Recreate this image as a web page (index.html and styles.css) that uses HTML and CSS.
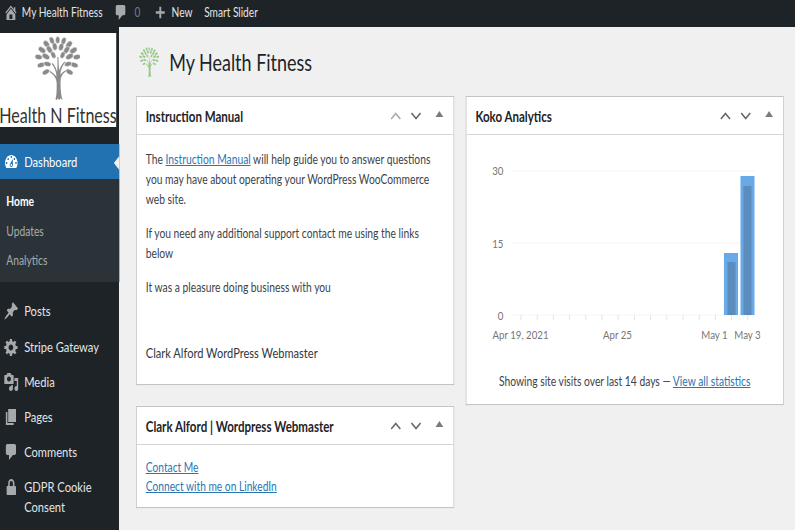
FILE: index.html
```html
<!DOCTYPE html>
<html lang="en">
<head>
  <meta charset="UTF-8" />
  <title>Dashboard | My Health Fitness</title>
  <link rel="stylesheet" href="styles.css">
</head>
<body>

  <svg class="defs" width="0" height="0">
    <symbol id="i-home" viewBox="1 1 18 18"><path d="M16 8.5l1.53 1.53-1.06 1.06L10 4.62l-6.47 6.47-1.06-1.06L10 2.5l4 4v-2h2v4zm-6-2.46l6 5.99V18H4v-5.97zM12 17v-5H8v5h4z"/></symbol>
    <symbol id="i-comment" viewBox="1 1 18 18"><path d="M5 2h9c1.1 0 2 .9 2 2v7c0 1.1-.9 2-2 2h-2l-5 5v-5H5c-1.1 0-2-.9-2-2V4c0-1.1.9-2 2-2z"/></symbol>
    <symbol id="i-plus" viewBox="2 2 16 16"><path d="M17 8.5v3h-5.500V17h-3v-5.500H3v-3h5.500V3h3v5.500z"/></symbol>
    <symbol id="i-dash" viewBox="1 1 18 18"><path d="M3.76 16h12.48c1.1-1.37 1.76-3.11 1.76-5 0-4.42-3.58-8-8-8s-8 3.58-8 8c0 1.89.66 3.63 1.76 5zM10 4c.55 0 1 .45 1 1s-.45 1-1 1-1-.45-1-1 .45-1 1-1zM6 6c.55 0 1 .45 1 1s-.45 1-1 1-1-.45-1-1 .45-1 1-1zm8 0c.55 0 1 .45 1 1s-.45 1-1 1-1-.45-1-1 .45-1 1-1zm-5.37 5.550L12 7v6c0 1.100-.9 2-2 2s-2-.9-2-2c0-.57.24-1.080.63-1.450zM4 10c.55 0 1 .45 1 1s-.45 1-1 1-1-.45-1-1 .45-1 1-1zm12 0c.55 0 1 .45 1 1s-.45 1-1 1-1-.45-1-1 .45-1 1-1zm-5 3c0-.55-.45-1-1-1s-1 .45-1 1 .45 1 1 1 1-.45 1-1z"/></symbol>
    <symbol id="i-pin" viewBox="1 1 18 18"><path d="M10.440 3.020l1.820-1.820 6.360 6.350-1.830 1.820c-1.050-.68-2.480-.57-3.410.36l-.75.75c-.92.93-1.040 2.350-.35 3.410l-1.830 1.820-2.410-2.410-2.800 2.790c-.42.42-3.380 2.710-3.800 2.290s1.860-3.390 2.280-3.810l2.790-2.790L4.100 9.360l1.830-1.820c1.050.69 2.480.57 3.400-.36l.75-.75c.93-.92 1.050-2.350.36-3.410z"/></symbol>
    <symbol id="i-gear" viewBox="1 1 18 18"><path d="M18 12h-2.180c-.17.7-.44 1.350-.81 1.930l1.540 1.540-2.100 2.100-1.540-1.540c-.58.36-1.230.63-1.910.79V19H8v-2.180c-.68-.16-1.330-.43-1.910-.79l-1.540 1.540-2.120-2.120 1.540-1.540c-.36-.58-.63-1.230-.79-1.910H1V9.030h2.170c.16-.7.44-1.350.8-1.940L2.430 5.550l2.100-2.100 1.540 1.540c.58-.37 1.240-.64 1.930-.81V2h3v2.180c.68.16 1.330.43 1.910.79l1.540-1.540 2.120 2.120-1.540 1.540c.36.59.64 1.240.8 1.940H18V12zm-8.500 1.500c1.660 0 3-1.340 3-3s-1.340-3-3-3-3 1.340-3 3 1.340 3 3 3z"/></symbol>
    <symbol id="i-media" viewBox="1 1 18 18"><path d="M13 11V4c0-.55-.45-1-1-1h-1.670L9 1H5L3.670 3H2c-.55 0-1 .45-1 1v7c0 .55.45 1 1 1h10c.55 0 1-.45 1-1zM7 4.500c1.380 0 2.500 1.120 2.500 2.500S8.380 9.500 7 9.500 4.500 8.380 4.500 7 5.620 4.500 7 4.500zM14 6h5v10.500c0 1.380-1.120 2.500-2.500 2.500S14 17.880 14 16.500s1.120-2.500 2.500-2.500c.17 0 .34.02.5.05V9h-3V6zm-4 8.050V13h2v3.500c0 1.380-1.120 2.500-2.500 2.500S7 17.880 7 16.500 8.120 14 9.500 14c.17 0 .34.02.5.05z"/></symbol>
    <symbol id="i-pages" viewBox="1 1 18 18"><path d="M6 15V2h10v13H6zm-1 1h8v2H3V5h2v11z"/></symbol>
    <symbol id="i-lock" viewBox="1 1 18 18"><path d="M14 9h1c.55 0 1 .45 1 1v7c0 .55-.45 1-1 1H5c-.55 0-1-.45-1-1v-7c0-.55.45-1 1-1h1V6c0-2.200 1.800-4 4-4s4 1.800 4 4v3zm-2 0V6c0-1.100-.9-2-2-2s-2 .9-2 2v3h4z"/></symbol>
    <symbol id="i-up" viewBox="0 0 12 8" preserveAspectRatio="none"><path d="M1 7l5-5.500L11 7" fill="none" stroke="currentColor" stroke-width="1.800"/></symbol>
    <symbol id="i-down" viewBox="0 0 12 8" preserveAspectRatio="none"><path d="M1 1l5 5.500L11 1" fill="none" stroke="currentColor" stroke-width="1.800"/></symbol>
    <symbol id="i-tree" viewBox="0 0 46 64" preserveAspectRatio="none">
      <path class="trunk" d="M20.500 64c1.200-3 1.600-9 1.400-17-.1-5-3.500-9-8.500-12l.6-.8c3.500 2 6 4 7.800 6.500-.3-5-1.700-9-5-13l.8-.6c2.500 2.800 4 5.500 4.800 9 .5-5 .5-10 .2-15h1c.3 5 .4 9 .9 13.500 1-3.500 3-6.500 5.500-9l.7.7c-3 3.500-4.900 7.500-5 12.500 2-2.500 4.500-4.500 8-6l.4.900c-5 2.500-8 6-8.200 11-.2 8 .4 15 2 19.300l-2.400-1.800-1 2-1.500-2-1 2.200-1.500-2z"/>
      <g class="leaves">
        <ellipse cx="23" cy="4" rx="2.200" ry="3.500"/>
        <ellipse cx="17" cy="4.500" rx="2.400" ry="3.800" transform="rotate(-20 17 4.500)"/>
        <ellipse cx="29" cy="5" rx="2.400" ry="3.800" transform="rotate(20 29 5)"/>
        <ellipse cx="11.500" cy="8" rx="2.600" ry="4" transform="rotate(-40 11.500 8)"/>
        <ellipse cx="34.500" cy="8.500" rx="2.600" ry="4" transform="rotate(40 34.500 8.500)"/>
        <ellipse cx="20" cy="10.500" rx="2.500" ry="3.800" transform="rotate(-10 20 10.500)"/>
        <ellipse cx="26.500" cy="11" rx="2.500" ry="3.800" transform="rotate(15 26.500 11)"/>
        <ellipse cx="14.500" cy="13.500" rx="2.500" ry="4" transform="rotate(-35 14.500 13.500)"/>
        <ellipse cx="32" cy="14" rx="2.500" ry="4" transform="rotate(35 32 14)"/>
        <ellipse cx="7" cy="14" rx="2.600" ry="4.200" transform="rotate(-55 7 14)"/>
        <ellipse cx="39" cy="14.500" rx="2.600" ry="4.200" transform="rotate(55 39 14.500)"/>
        <ellipse cx="3.500" cy="21" rx="2.600" ry="3.800" transform="rotate(-80 3.500 21)"/>
        <ellipse cx="42.500" cy="21" rx="2.600" ry="3.800" transform="rotate(80 42.500 21)"/>
        <ellipse cx="11" cy="20.500" rx="2.600" ry="4.200" transform="rotate(-60 11 20.500)"/>
        <ellipse cx="35" cy="20.500" rx="2.600" ry="4.200" transform="rotate(60 35 20.500)"/>
        <ellipse cx="18.500" cy="19" rx="2.300" ry="3.600" transform="rotate(-25 18.500 19)"/>
        <ellipse cx="28" cy="19" rx="2.300" ry="3.600" transform="rotate(25 28 19)"/>
        <ellipse cx="6" cy="29" rx="2.500" ry="4" transform="rotate(-110 6 29)"/>
        <ellipse cx="40" cy="29" rx="2.500" ry="4" transform="rotate(110 40 29)"/>
        <ellipse cx="12.500" cy="28" rx="2.400" ry="3.800" transform="rotate(-75 12.500 28)"/>
        <ellipse cx="33.500" cy="28" rx="2.400" ry="3.800" transform="rotate(75 33.500 28)"/>
        <ellipse cx="11" cy="36" rx="2.400" ry="4" transform="rotate(-120 11 36)"/>
        <ellipse cx="35" cy="36" rx="2.400" ry="4" transform="rotate(120 35 36)"/>
      </g>
    </symbol>
  </svg>

  <div class="topbar">
    <div class="topbar-items squeeze">
      <span class="bar-item"><svg class="bar-icon"><use href="#i-home"/></svg>My Health Fitness</span>
      <span class="bar-item bar-comments"><svg class="bar-icon"><use href="#i-comment"/></svg>0</span>
      <span class="bar-item bar-new"><svg class="bar-icon"><use href="#i-plus"/></svg>New</span>
      <span class="bar-item">Smart Slider</span>
    </div>
  </div>

  <div class="wrap">
    <div class="sidebar">
      <div class="sidebar-inner squeeze">
        <div class="logo">
          <svg class="logo-tree"><use href="#i-tree"/></svg>
          <span class="logo-text">Health N Fitness</span>
        </div>

        <div class="menu-item current"><svg class="menu-icon"><use href="#i-dash"/></svg>Dashboard</div>
        <div class="submenu">
          <div class="sub-item active">Home</div>
          <div class="sub-item">Updates</div>
          <div class="sub-item">Analytics</div>
        </div>

        <div class="menu-list">
          <div class="menu-item"><svg class="menu-icon"><use href="#i-pin"/></svg>Posts</div>
          <div class="menu-item"><svg class="menu-icon"><use href="#i-gear"/></svg>Stripe Gateway</div>
          <div class="menu-item"><svg class="menu-icon"><use href="#i-media"/></svg>Media</div>
          <div class="menu-item"><svg class="menu-icon"><use href="#i-pages"/></svg>Pages</div>
          <div class="menu-item"><svg class="menu-icon"><use href="#i-comment"/></svg>Comments</div>
          <div class="menu-item"><svg class="menu-icon"><use href="#i-lock"/></svg><span>GDPR Cookie Consent</span></div>
        </div>
      </div>
    </div>

    <div class="main">
      <div class="page-title squeeze">
        <svg class="title-tree"><use href="#i-tree"/></svg>
        <h1>My Health Fitness</h1>
      </div>

      <div class="columns">
        <div class="column">
          <div class="card card-manual squeeze">
            <div class="card-head">
              <h2>Instruction Manual</h2>
              <svg class="ctl ctl-off"><use href="#i-up"/></svg>
              <svg class="ctl"><use href="#i-down"/></svg>
              <span class="ctl-toggle"></span>
            </div>
            <div class="card-body">
              <p>The <a href="#">Instruction Manual</a> will help guide you to answer questions<br>you may have about operating your WordPress WooCommerce<br>web site.</p>
              <p>If you need any additional support contact me using the links below</p>
              <p>It was a pleasure doing business with you</p>
              <p class="signature">Clark Alford WordPress Webmaster</p>
            </div>
          </div>

          <div class="card squeeze">
            <div class="card-head">
              <h2>Clark Alford | Wordpress Webmaster</h2>
              <svg class="ctl"><use href="#i-up"/></svg>
              <svg class="ctl"><use href="#i-down"/></svg>
              <span class="ctl-toggle"></span>
            </div>
            <div class="card-body links">
              <a href="#">Contact Me</a>
              <a href="#">Connect with me on LinkedIn</a>
            </div>
          </div>
        </div>

        <div class="column">
          <div class="card card-koko squeeze">
            <div class="card-head">
              <h2>Koko Analytics</h2>
              <svg class="ctl"><use href="#i-up"/></svg>
              <svg class="ctl"><use href="#i-down"/></svg>
              <span class="ctl-toggle"></span>
            </div>
            <div class="chart-body">
              <svg class="chart" width="405" height="220" viewBox="598.700 135 405 220">
                <g class="grid">
                  <line x1="657.700" x2="968" y1="171" y2="171"/>
                  <line x1="657.700" x2="968" y1="243" y2="243"/>
                  <line x1="657.700" x2="968" y1="315" y2="315"/>
                </g>
                <g class="ticks">
                  <line x1="668.600" x2="668.600" y1="315" y2="320"/>
                  <line x1="689.400" x2="689.400" y1="315" y2="320"/>
                  <line x1="710.100" x2="710.100" y1="315" y2="320"/>
                  <line x1="730.900" x2="730.900" y1="315" y2="320"/>
                  <line x1="751.700" x2="751.700" y1="315" y2="320"/>
                  <line x1="772.400" x2="772.400" y1="315" y2="320"/>
                  <line x1="793.200" x2="793.200" y1="315" y2="320"/>
                  <line x1="814" x2="814" y1="315" y2="320"/>
                  <line x1="834.700" x2="834.700" y1="315" y2="320"/>
                  <line x1="855.500" x2="855.500" y1="315" y2="320"/>
                  <line x1="876.300" x2="876.300" y1="315" y2="320"/>
                  <line x1="897.100" x2="897.100" y1="315" y2="320"/>
                  <line x1="917.800" x2="917.800" y1="315" y2="320"/>
                  <line x1="938.600" x2="938.600" y1="315" y2="320"/>
                  <line x1="959.400" x2="959.400" y1="315" y2="320"/>
                </g>
                <rect class="bar-outer" x="928.800" y="253" width="18" height="62"/>
                <rect class="bar-inner" x="933.300" y="262" width="10.300" height="53"/>
                <rect class="bar-outer" x="950" y="176" width="18" height="139"/>
                <rect class="bar-inner" x="953.800" y="186" width="10.300" height="129"/>
                <g class="y-labels">
                  <text x="646" y="175">30</text>
                  <text x="646" y="248">15</text>
                  <text x="646" y="320">0</text>
                </g>
                <g class="x-labels">
                  <text x="668" y="339">Apr 19, 2021</text>
                  <text x="792.300" y="339">Apr 25</text>
                  <text x="916.700" y="339">May 1</text>
                  <text x="959" y="339">May 3</text>
                </g>
              </svg>
              <p class="chart-note">Showing site visits over last 14 days — <a href="#">View all statistics</a></p>
            </div>
          </div>
        </div>
      </div>
    </div>
  </div>

</body>
</html>
```

FILE: styles.css
```css
body {
  margin: 0;
  width: 795px;
  height: 530px;
  overflow: hidden;
  background: #f0f0f1;
  font-family: Lato, "Open Sans", sans-serif;
  font-size: 13.200px;
  color: #3c434a;
}
a {
  color: #2a76b5;
}
.defs {
  position: absolute;
}

.squeeze {
  transform: scaleX(0.78);
  transform-origin: 0 0;
}

/* top bar */
.topbar {
  height: 27px;
  background: #1d2327;
}
.topbar-items {
  width: 400px;
  height: 24px;
  color: #e3e5e6;
  display: flex;
  align-items: center;
  padding-left: 5px;
  box-sizing: border-box;
  font-size: 13px;
}
.bar-item {
  display: flex;
  align-items: center;
  gap: 5px;
  margin-right: 15px;
}
.bar-icon {
  width: 18px;
  height: 17px;
  fill: #a7aaad;
}
.bar-comments {
  color: #787c82;
  gap: 8px;
  margin-right: 18px;
}
.bar-new {
  gap: 7px;
}
.bar-new .bar-icon {
  width: 15px;
  height: 13px;
}

/* sidebar */
.wrap {
  display: flex;
  height: 503px;
}
.sidebar {
  width: 119px;
  flex-shrink: 0;
  background: #1d2327;
}
.sidebar-inner {
  width: 152.600px;
  padding-top: 6px;
}
.logo {
  width: 148.700px;
  height: 94px;
  background: white;
  margin-bottom: 17px;
  display: flex;
  flex-direction: column;
  align-items: center;
}
.logo-tree {
  width: 58px;
  height: 64px;
  margin-top: 3px;
  flex-shrink: 0;
  fill: #8a8a8a;
}
.logo-tree .trunk {
  fill: #333;
}
.leaves ellipse {
  stroke: white;
  stroke-width: 0.5;
}
.logo-text {
  margin-top: 4px;
  font-size: 20.600px;
  line-height: 23px;
  color: #333;
  white-space: nowrap;
}
.menu-item {
  position: relative;
  display: flex;
  align-items: flex-start;
  gap: 7px;
  padding: 7px 6px 8px 5px;
  line-height: 20px;
  font-size: 14.300px;
  color: #e3e5e6;
}
.menu-list .menu-item:first-child {
  padding-bottom: 9px;
}
.menu-item.current {
  background: #2271b1;
  color: white;
  padding-top: 8px;
  padding-bottom: 7px;
}
.menu-item.current::after {
  content: "";
  position: absolute;
  right: 0;
  top: 12px;
  border: 7px solid transparent;
  border-left: 0;
  border-right-color: #f0f0f1;
}
.menu-icon {
  width: 19px;
  height: 18px;
  flex-shrink: 0;
  margin-top: 1px;
  fill: #a7aaad;
}
.current .menu-icon {
  fill: white;
}
.submenu {
  background: #2c3338;
  height: 103px;
  padding-top: 8px;
  box-sizing: border-box;
  margin-bottom: 12px;
}
.sub-item {
  padding-left: 8px;
  height: 29.500px;
  line-height: 29.500px;
  font-size: 13.200px;
  color: #a7aaad;
}
.sub-item.active {
  color: white;
  font-weight: bold;
}

/* main */
.main {
  flex: 1;
  padding-left: 17px;
  min-width: 0;
}
.page-title {
  display: flex;
  align-items: center;
  gap: 12.800px;
  width: 400px;
  height: 69px;
  padding-left: 3.800px;
  box-sizing: border-box;
}
.title-tree {
  width: 26px;
  height: 30px;
  fill: #97c787;
}
.title-tree .trunk {
  fill: #4e8f45;
}
.page-title h1 {
  margin: 0;
  font-size: 23px;
  font-weight: normal;
  color: #1d2327;
}
.columns {
  display: grid;
  grid-template-columns: 318px 318px;
  gap: 12px;
}
.column {
  min-width: 0;
}
.card {
  width: 407.700px;
  box-sizing: border-box;
  background: white;
  border: 1px solid #c3c4c7;
  box-shadow: 0 1px 1px rgba(0,0,0,0.04);
  margin-bottom: 21px;
}
.card-manual {
  height: 289px;
}
.card-koko {
  height: 309px;
  margin-left: -89.700px;
  transform-origin: 100% 0;
}
.card-head {
  display: flex;
  align-items: center;
  height: 37px;
  padding: 0 13px 0 11.500px;
  border-bottom: 1px solid #d5d6d8;
}
.card-head h2 {
  flex: 1;
  margin: 0;
  font-size: 14.800px;
  font-weight: bold;
  color: #1d2327;
}
.ctl {
  width: 14px;
  height: 8px;
  margin-left: 11.600px;
  color: #646970;
}
.ctl-off {
  color: #a7aaad;
}
.ctl-toggle {
  margin: 0 0 3px 18px;
  border: 5px solid transparent;
  border-top: 0;
  border-bottom: 6px solid #787c82;
}
.card-body {
  padding: 14px 11.500px 0;
  line-height: 20px;
}
.card-body p {
  margin: 0 0 14px;
}
.card-body .signature {
  margin-top: 46px;
  font-size: 14.200px;
  color: #32373c;
}
.links {
  height: 62px;
  padding-top: 12.500px;
  box-sizing: border-box;
  line-height: 19px;
  font-size: 13.100px;
  display: flex;
  flex-direction: column;
  align-items: flex-start;
}
.chart-body {
  text-align: center;
}
.chart {
  display: block;
}
.grid line {
  stroke: #f3f3f4;
  stroke-width: 1;
}
.ticks line {
  stroke: #e0e0e0;
  stroke-width: 1;
}
.bar-outer {
  fill: #68a9e8;
}
.bar-inner {
  fill: #5b8cbe;
}
.y-labels text {
  text-anchor: end;
  font-size: 12.400px;
  fill: #757575;
}
.x-labels text {
  text-anchor: middle;
  font-size: 12.400px;
  fill: #757575;
}
.chart-note {
  margin: 17px 0 0;
  line-height: 18px;
  font-size: 13.200px;
}
```
